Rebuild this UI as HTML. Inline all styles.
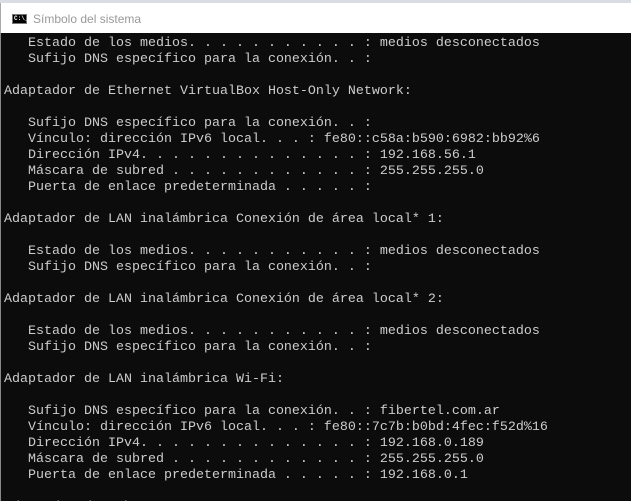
<!DOCTYPE html>
<html><head><meta charset="utf-8"><style>
html,body{margin:0;width:631px;height:501px;overflow:hidden}
body{background:#fff;position:relative;font-family:"Liberation Sans",sans-serif}
.strip{position:absolute;left:0;top:0;width:631px;height:3px;background:#d9dde3}
.title{position:absolute;left:0;top:3px;width:631px;height:30px;background:#fff;border-left:1px solid #aaa}
.icon{position:absolute;left:11px;top:11px;width:15px;height:10px;background:#000;border:1px solid #777;box-sizing:border-box;color:#fff;font:bold 6px "Liberation Mono",monospace;line-height:8px;padding-left:1px}
.tt{position:absolute;left:32px;top:9px;font-size:12px;color:#999}
.con{position:absolute;left:0;top:33px;width:631px;height:468px;background:#0c0c0c;border-left:1px solid #888;box-sizing:border-box;overflow:hidden}
pre{margin:0;position:absolute;left:3px;top:3px;font:13.33px/16px "Liberation Mono",monospace;color:#cccccc}
</style></head><body>
<div class="strip"></div>
<div class="title"><div class="icon">C:\_</div><div class="tt">Símbolo del sistema</div></div>
<div class="con"><pre>   Estado de los medios. . . . . . . . . . . : medios desconectados
   Sufijo DNS específico para la conexión. . :

Adaptador de Ethernet VirtualBox Host-Only Network:

   Sufijo DNS específico para la conexión. . :
   Vínculo: dirección IPv6 local. . . : fe80::c58a:b590:6982:bb92%6
   Dirección IPv4. . . . . . . . . . . . . . : 192.168.56.1
   Máscara de subred . . . . . . . . . . . . : 255.255.255.0
   Puerta de enlace predeterminada . . . . . :

Adaptador de LAN inalámbrica Conexión de área local* 1:

   Estado de los medios. . . . . . . . . . . : medios desconectados
   Sufijo DNS específico para la conexión. . :

Adaptador de LAN inalámbrica Conexión de área local* 2:

   Estado de los medios. . . . . . . . . . . : medios desconectados
   Sufijo DNS específico para la conexión. . :

Adaptador de LAN inalámbrica Wi-Fi:

   Sufijo DNS específico para la conexión. . : fibertel.com.ar
   Vínculo: dirección IPv6 local. . . : fe80::7c7b:b0bd:4fec:f52d%16
   Dirección IPv4. . . . . . . . . . . . . . : 192.168.0.189
   Máscara de subred . . . . . . . . . . . . : 255.255.255.0
   Puerta de enlace predeterminada . . . . . : 192.168.0.1

Adaptador de Ethernet</pre></div>
</body></html>
